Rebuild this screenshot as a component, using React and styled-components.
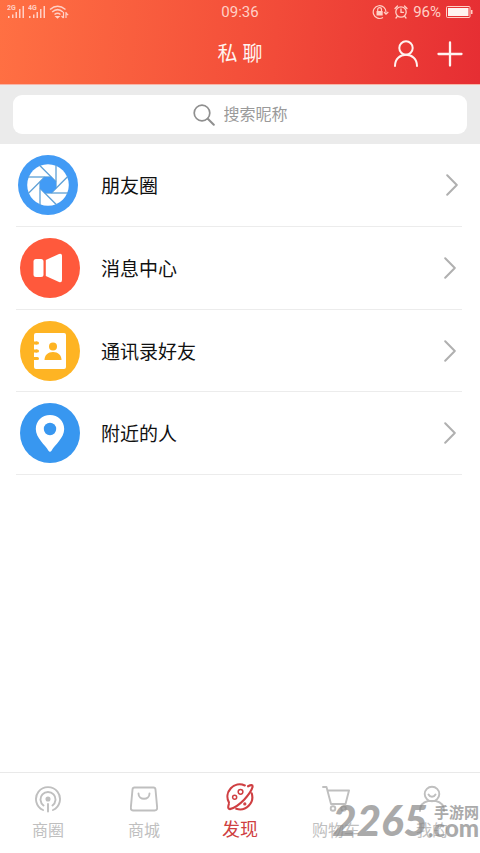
import React from 'react';
import styled, { createGlobalStyle } from 'styled-components';

const GlobalStyle = createGlobalStyle`
    * {
        box-sizing: border-box;
    }
    body {
        margin: 0;
        background: #fff;
        font-family: Roboto, "Noto Sans CJK SC", sans-serif;
    }
    button, input {
        font: inherit;
        padding: 0;
        border: 0;
        background: none;
    }
`;

const Page = styled.div`
    position: relative;
    display: flex;
    flex-direction: column;
    min-height: 100vh;
`;

const Header = styled.header`
    background: linear-gradient(95deg, #ff7043 0%, #f4503a 50%, #e62e33 100%);
    color: #ffe9e4;
    border-bottom: 1px solid #f7b5a8;
`;

const StatusBar = styled.div`
    display: grid;
    grid-template-columns: 1fr auto 1fr;
    align-items: center;
    height: 24px;
    padding: 0 7px;
    font-size: 15px;
    color: #ffd0c6;
`;

const StatusGroup = styled.div`
    display: flex;
    align-items: center;
    justify-content: ${props => props.$end ? 'flex-end' : 'flex-start'};
    gap: ${props => props.$end ? 5 : 3}px;
`;

const TitleBar = styled.div`
    display: grid;
    grid-template-columns: 1fr auto 1fr;
    align-items: center;
    height: 60px;
    padding: 0 17px;
`;

const Title = styled.h1`
    grid-column: 2;
    margin: 0;
    font-size: 20px;
    line-height: 24px;
    font-weight: 400;
    color: #fff3f0;
`;

const Actions = styled.div`
    display: flex;
    justify-content: flex-end;
    gap: 18px;
`;

const IconButton = styled.button`
    display: flex;
    color: #fff3f0;
`;

const SearchArea = styled.div`
    padding: 10px 13px;
    background: #ebebeb;
`;

const SearchBox = styled.label`
    display: flex;
    align-items: center;
    justify-content: center;
    gap: 9px;
    height: 39px;
    border-radius: 9px;
    background: #fff;
    color: #8f8f8f;
`;

const SearchInput = styled.input`
    width: 64px;
    height: 24px;
    font-size: 16px;
    outline: none;
    &::placeholder {
        color: #9a9a9a;
        opacity: 1;
    }
`;

const List = styled.main`
    flex: 1;
    padding: 0 18px 0 16px;
`;

const Row = styled.button`
    display: flex;
    align-items: center;
    width: 100%;
    height: 83px;
    padding: 0 ${props => props.$first ? 4 : 6}px 0 ${props => props.$first ? 2 : 4}px;
    border-bottom: 1px solid #ececec;
    text-align: left;
    &:nth-child(3) {
        height: 82px;
    }
`;

const Badge = styled.span`
    display: flex;
    flex: none;
    width: 60px;
    height: 60px;
    border-radius: 50%;
    background: ${props => props.$color};
`;

const RowLabel = styled.span`
    flex: 1;
    margin-left: ${props => props.$first ? 23 : 21}px;
    padding-top: 4px;
    font-size: 19px;
    line-height: 28px;
    color: #111;
`;

const TabBar = styled.nav`
    display: grid;
    grid-template-columns: repeat(5, 1fr);
    height: 81px;
    border-top: 1px solid #e9e9e9;
`;

const Tab = styled.button`
    display: flex;
    flex-direction: column;
    align-items: center;
    padding-top: ${props => props.$active ? 9 : 12}px;
    gap: 6px;
    font-size: ${props => props.$active ? 18 : 16}px;
    line-height: 24px;
    color: ${props => props.$active ? '#cf3f42' : '#bfbfbf'};
`;

const Watermark = styled.div`
    position: absolute;
    right: 1px;
    bottom: 12px;
    display: flex;
    align-items: flex-end;
    color: #8a8a8a;
    opacity: 0.72;
    font-family: Lato, "Noto Sans CJK SC", sans-serif;
    font-weight: 900;
    pointer-events: none;
`;

const MarkNumber = styled.span`
    font-size: 42px;
    line-height: 42px;
    font-style: italic;
`;

const MarkSide = styled.span`
    display: flex;
    flex-direction: column;
    align-items: flex-end;
    font-size: 24px;
    line-height: 16px;
    padding-bottom: 5px;
`;

const MarkName = styled.span`
    font-size: 15px;
    line-height: 16px;
    font-weight: 700;
`;

function Signal({ label }) {
    return (
        <svg width="18" height="16" viewBox="0 0 18 16" fill="currentColor">
            <text x="0" y="6" fontSize="7" fontWeight="700">{label}</text>
            <path d="M1 12h1.5v2H1zM5 10.500h1.500V14H5zM8.500 8H10v6H8.500zM12 5h1.500v9H12zM15.500 2H17v12h-1.500z" />
        </svg>
    );
}

function Wifi() {
    return (
        <svg width="20" height="16" viewBox="0 0 20 16" fill="none" stroke="currentColor" strokeWidth="1.5">
            <path d="M1 5.500Q8.500-1 16.500 5.500M3.200 8Q8.500 3.300 14 8M5.500 10.500Q8.500 8 11.500 10.500" />
            <path d="M7 12.500l1.500 1.500 1.500-1.500zM14.500 8v6M17 8v6M12.500 12l2 2M17 9l2.200 2.200" strokeWidth="1.200" />
        </svg>
    );
}

function RotationLock() {
    return (
        <svg width="17" height="16" viewBox="0 0 17 16" fill="none" stroke="currentColor" strokeWidth="1.200">
            <path d="M11 13.500A6.400 6.400 0 1 1 14 8.500M12 8l2 2.200L16.300 8" />
            <path d="M5.700 7V5.500a1.900 1.900 0 0 1 3.800 0V7" />
            <path d="M4.500 7h6.200v4.500H4.500z" fill="currentColor" stroke="none" />
        </svg>
    );
}

function AlarmClock() {
    return (
        <svg width="14" height="16" viewBox="0 0 14 16" fill="none" stroke="currentColor" strokeWidth="1.300" strokeLinecap="round">
            <circle cx="7" cy="8" r="5.200" />
            <path d="M7 5v3.300h2.500M1 4.500L3.500 2M13 4.500L10.500 2M3.300 12.300L2 14M10.700 12.300L12 14" />
        </svg>
    );
}

function Battery() {
    return (
        <svg width="27" height="13" viewBox="0 0 27 13">
            <rect x="0.500" y="0.500" width="23.500" height="11" rx="1" fill="none" stroke="currentColor" />
            <path d="M2 2h20.500v8H2z" fill="#fff3f0" />
            <path d="M25 4h1.500v4H25z" fill="currentColor" />
        </svg>
    );
}

function UserIcon() {
    return (
        <svg width="26" height="28" viewBox="0 0 26 28" fill="none" stroke="currentColor" strokeWidth="2" strokeLinecap="round">
            <circle cx="13" cy="8" r="6.700" />
            <path d="M2 26c0-7 5-11.300 11-11.300S24 19 24 26" />
        </svg>
    );
}

function PlusIcon() {
    return (
        <svg width="26" height="28" viewBox="0 0 26 28" fill="none" stroke="currentColor" strokeWidth="2.300" strokeLinecap="round">
            <path d="M13 2.500v23M1.500 14h23" />
        </svg>
    );
}

function SearchIcon() {
    return (
        <svg width="22" height="22" viewBox="0 0 22 22" fill="none" stroke="currentColor" strokeLinecap="round">
            <circle cx="9" cy="9" r="7.800" strokeWidth="1.700" />
            <path d="M14.800 14.800l6 6" strokeWidth="2" />
        </svg>
    );
}

function Chevron() {
    return (
        <svg width="12" height="22" viewBox="0 0 12 22" fill="none" stroke="#b0b0b0" strokeWidth="2" strokeLinecap="round" strokeLinejoin="round">
            <path d="M1.200 1.200L10.800 11L1.200 20.800" />
        </svg>
    );
}

function ApertureIcon() {
    // one blade edge, repeated round the centre
    return (
        <svg width="60" height="60" viewBox="0 0 60 60">
            <circle cx="30" cy="30" r="20.800" fill="#fff" />
            {[0, 45, 90, 135, 180, 225, 270, 315].map(angle => (
                <path key={angle} d="M38 10V33.300" stroke="#5c9fd6" strokeWidth="1.300" transform={`rotate(${angle} 30 30)`} />
            ))}
            <path d="M26.700 22H33.300L38 26.700V33.300L33.300 38H26.700L22 33.300V26.700z" fill="#429bf5" />
        </svg>
    );
}

function SpeakerIcon() {
    return (
        <svg width="60" height="60" viewBox="0 0 60 60" fill="#fff">
            <rect x="13.500" y="21" width="10" height="18" rx="2.500" />
            <path d="M25.800 22L39 16q3-1 3 2v24q0 3-3 2L25.800 38z" />
        </svg>
    );
}

function ContactsIcon() {
    return (
        <svg width="60" height="60" viewBox="0 0 60 60">
            <rect x="14" y="12" width="32" height="36" rx="2" fill="#fff" />
            <g fill="#feb423">
                <path d="M13 20.500h4v3h-4zM13 28.500h4v3h-4zM13 36h4v3h-4z" />
                <rect x="15" y="20.500" width="4" height="3" rx="1.500" />
                <rect x="15" y="28.500" width="4" height="3" rx="1.500" />
                <rect x="15" y="36" width="4" height="3" rx="1.500" />
                <circle cx="33" cy="25.500" r="4" />
                <path d="M24.500 39c0-5 3.500-8 8.500-8s8.500 3 8.500 8z" />
            </g>
        </svg>
    );
}

function PinIcon() {
    return (
        <svg width="60" height="60" viewBox="0 0 60 60">
            <path d="M30 12c-8 0-14.200 6-14.200 14 0 9 9.500 16 12.500 21.500q1.700 2.500 3.400 0C34.700 42 44.200 35 44.200 26 44.200 18 38 12 30 12z" fill="#fff" />
            <circle cx="30" cy="26" r="6.200" fill="#3897f0" />
        </svg>
    );
}

function TabIcon({ children, size = 28 }) {
    return (
        <svg width={size} height={size} viewBox="0 0 28 28" fill="none" stroke="currentColor" strokeWidth="1.900" strokeLinecap="round" strokeLinejoin="round">
            {children}
        </svg>
    );
}

const rows = [
    { label: '朋友圈', color: '#429bf5', icon: <ApertureIcon /> },
    { label: '消息中心', color: '#ff593c', icon: <SpeakerIcon /> },
    { label: '通讯录好友', color: '#feb423', icon: <ContactsIcon /> },
    { label: '附近的人', color: '#3897f0', icon: <PinIcon /> },
];

const tabs = [
    {
        label: '商圈',
        icon: (
            <TabIcon>
                <path d="M9 25a12 12 0 1 1 10 0M9.500 20.500a7.500 7.500 0 1 1 9 0M14 19v7.500" />
                <circle cx="14" cy="14" r="1.600" fill="currentColor" />
            </TabIcon>
        ),
    },
    {
        label: '商城',
        icon: (
            <TabIcon>
                <path d="M4.500 2.500h19q1.800 0 2 2l1.700 18.500q0 2.500-2.500 2.500H3.300q-2.500 0-2.500-2.500L2.500 4.500q.2-2 2-2zM8.500 8.500c0 7 11 7 11 0" />
            </TabIcon>
        ),
    },
    {
        label: '发现',
        active: true,
        icon: (
            <TabIcon size={30}>
                <path d="M18.500 3.200A11.500 11.500 0 0 0 3.600 19M24.900 10.500A11.500 11.500 0 0 1 10.500 25" strokeWidth="2" />
                <path d="M21.500 4q4.500-2.500 4.300.5C24 11 13.500 23 4.500 25.300q-2.500 0-.900-4.800" strokeWidth="2" />
                <circle cx="14.500" cy="9.200" r="2.200" strokeWidth="1.400" />
                <circle cx="9" cy="14.300" r="1.900" strokeWidth="1.400" />
                <circle cx="18.500" cy="20.500" r="1" fill="currentColor" strokeWidth="1" />
            </TabIcon>
        ),
    },
    {
        label: '购物车',
        icon: (
            <TabIcon>
                <path d="M1 2h3.500l4.500 17h14.500l3.500-13.500H5.500" />
                <circle cx="11" cy="23.500" r="2.300" />
                <circle cx="21.500" cy="23.500" r="2.300" />
            </TabIcon>
        ),
    },
    {
        label: '我的',
        icon: (
            <TabIcon>
                <circle cx="14" cy="9" r="7.300" />
                <path d="M10.500 9.500c1.500 3 5.500 3 7 0M2 26c0-5.500 3.500-9 8-10h8c4.500 1 8 4.500 8 10" />
            </TabIcon>
        ),
    },
];

function App() {
    return (
        <Page>
            <GlobalStyle />
            <Header>
                <StatusBar>
                    <StatusGroup>
                        <Signal label="2G" />
                        <Signal label="4G" />
                        <Wifi />
                    </StatusGroup>
                    <span>09:36</span>
                    <StatusGroup $end>
                        <RotationLock />
                        <AlarmClock />
                        <span>96%</span>
                        <Battery />
                    </StatusGroup>
                </StatusBar>
                <TitleBar>
                    <Title>私 聊</Title>
                    <Actions>
                        <IconButton aria-label="个人"><UserIcon /></IconButton>
                        <IconButton aria-label="添加"><PlusIcon /></IconButton>
                    </Actions>
                </TitleBar>
            </Header>
            <SearchArea>
                <SearchBox>
                    <SearchIcon />
                    <SearchInput type="text" placeholder="搜索昵称" />
                </SearchBox>
            </SearchArea>
            <List>
                {rows.map((row, i) => (
                    <Row key={row.label} $first={i === 0}>
                        <Badge $color={row.color}>{row.icon}</Badge>
                        <RowLabel $first={i === 0}>{row.label}</RowLabel>
                        <Chevron />
                    </Row>
                ))}
            </List>
            <TabBar>
                {tabs.map(tab => (
                    <Tab key={tab.label} $active={tab.active}>
                        {tab.icon}
                        <span>{tab.label}</span>
                    </Tab>
                ))}
            </TabBar>
            <Watermark>
                <MarkNumber>2265</MarkNumber>
                <MarkSide>
                    <MarkName>手游网</MarkName>
                    <span>.com</span>
                </MarkSide>
            </Watermark>
        </Page>
    );
}

export default App;
